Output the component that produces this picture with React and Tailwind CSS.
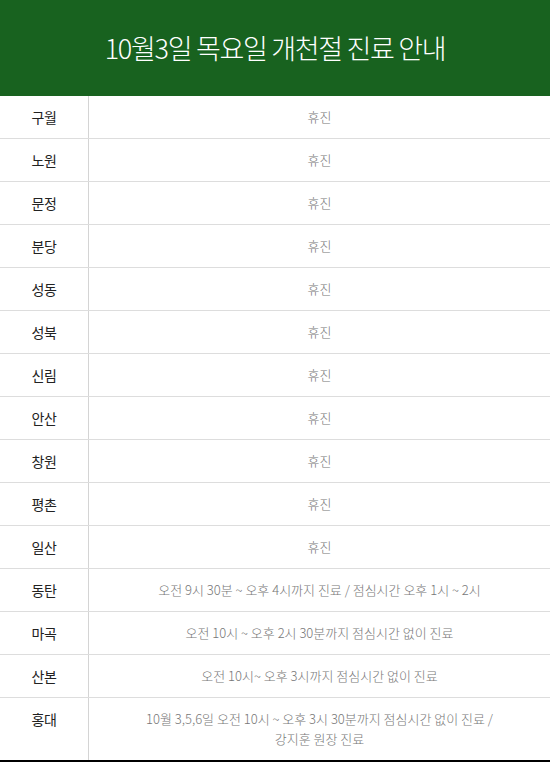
import React from "react";

const rows = [
  ["구월", "휴진"],
  ["노원", "휴진"],
  ["문정", "휴진"],
  ["분당", "휴진"],
  ["성동", "휴진"],
  ["성북", "휴진"],
  ["신림", "휴진"],
  ["안산", "휴진"],
  ["창원", "휴진"],
  ["평촌", "휴진"],
  ["일산", "휴진"],
  ["동탄", "오전 9시 30분 ~ 오후 4시까지 진료 / 점심시간 오후 1시 ~ 2시"],
  ["마곡", "오전 10시 ~ 오후 2시 30분까지 점심시간 없이 진료"],
  ["산본", "오전 10시~ 오후 3시까지 점심시간 없이 진료"],
];

export default function App() {
  return (
    <div
      className="w-[550px] bg-white"
      style={{ fontFamily: '"Noto Sans CJK KR", "Noto Sans", sans-serif' }}
    >
      <div className="h-[96px] bg-[#18621f] flex items-center justify-center">
        <h1 className="text-white text-[27px] font-light tracking-[-1.3px] leading-none pb-[2px]">
          10월3일 목요일 개천절 진료 안내
        </h1>
      </div>
      <div className="border-b-2 border-black">
        {rows.map(([a, b]) => (
          <div key={a} className="flex h-[43px] border-b border-[#dddddd]">
            <div className="w-[89px] border-r border-[#d4d4d4] flex items-center justify-center text-[14px] text-[#222] tracking-[-0.5px]">
              {a}
            </div>
            <div className="flex-1 flex items-center justify-center text-[13px] text-[#777] font-light tracking-[0px]">
              {b}
            </div>
          </div>
        ))}
        <div className="flex h-[62px]">
          <div className="w-[89px] border-r border-[#d4d4d4] flex items-start justify-center pt-[11px] text-[14px] text-[#222] tracking-[-0.5px]">
            홍대
          </div>
          <div className="flex-1 flex flex-col items-center pt-[11px] text-[13px] text-[#777] font-light tracking-[0px] leading-[20px]">
            <span>10월 3,5,6일 오전 10시 ~ 오후 3시 30분까지 점심시간 없이 진료 /</span>
            <span>강지훈 원장 진료</span>
          </div>
        </div>
      </div>
    </div>
  );
}
